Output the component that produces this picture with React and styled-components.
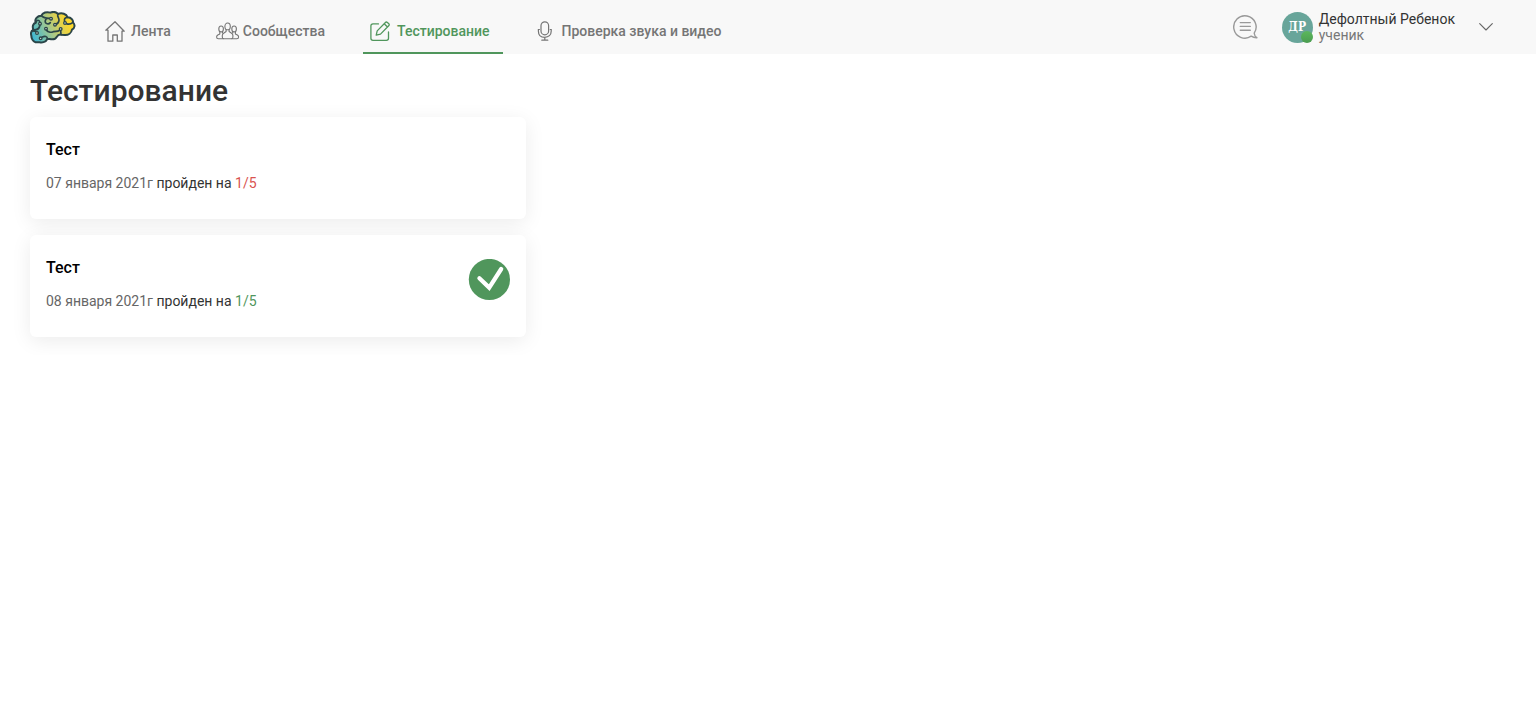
import React from "react";
import styled, { createGlobalStyle } from "styled-components";

const GlobalStyle = createGlobalStyle`
  *, *::before, *::after { box-sizing: border-box; }
  body {
    margin: 0;
    background: #fff;
    color: #333;
    font-family: Roboto, "Liberation Sans", sans-serif;
    font-size: 14px;
  }
`;

const Header = styled.header`
  display: flex;
  align-items: center;
  height: 54px;
  padding: 0 43px 0 30px;
  background: #f8f8f8;
`;

const LogoLink = styled.a`
  display: flex;
  margin-right: 22px;
`;

const Nav = styled.nav`
  display: flex;
  align-self: stretch;
  gap: 24px;
`;

const NavLink = styled.a`
  display: flex;
  align-items: center;
  gap: ${(p) => p.$gap}px;
  padding: 10px 14px 0 7px;
  border-bottom: 2px solid ${(p) => (p.$active ? "#50965c" : "transparent")};
  color: ${(p) => (p.$active ? "#50965c" : "#757575")};
  font-weight: 500;
  line-height: 20px;
  text-decoration: none;
  white-space: nowrap;
`;

const Account = styled.div`
  display: flex;
  align-items: center;
  margin-left: auto;
`;

const IconButton = styled.button`
  display: flex;
  padding: 0;
  border: 0;
  background: none;
  color: #999;
  cursor: pointer;
`;

const ProfileButton = styled.button`
  display: flex;
  align-items: center;
  gap: 6px;
  margin-left: 24px;
  padding: 0;
  border: 0;
  background: none;
  font: inherit;
  text-align: left;
  color: #666;
  cursor: pointer;
`;

const Avatar = styled.span`
  position: relative;
  display: flex;
  align-items: center;
  justify-content: center;
  width: 31px;
  height: 31px;
  border-radius: 50%;
  background: #68a59a;
  color: #fff;
  font: bold 12px "DejaVu Serif Condensed", "DejaVu Serif", serif;
`;

const OnlineDot = styled.span`
  position: absolute;
  right: 0;
  bottom: 0;
  width: 12px;
  height: 12px;
  border-radius: 50%;
  background: linear-gradient(#5cb85c, #4a9c50);
`;

const Person = styled.span`
  display: flex;
  flex-direction: column;
  margin-right: 18px;
  line-height: 16px;
`;

const PersonName = styled.span`
  color: #333;
`;

const PersonRole = styled.span`
  color: #777;
`;

const Main = styled.main`
  padding: 18px 30px;
`;

const Title = styled.h1`
  margin: 0 0 7px;
  font-size: 30px;
  font-weight: 500;
  line-height: 38px;
`;

const TestList = styled.ul`
  display: flex;
  flex-direction: column;
  gap: 16px;
  width: 34%;
  min-width: 320px;
  max-width: 496px;
  margin: 0;
  padding: 0;
  list-style: none;
`;

const Card = styled.li`
  display: flex;
  align-items: flex-start;
  justify-content: space-between;
  padding: 24px 16px 26px;
  border-radius: 6px;
  background: #fff;
  box-shadow: 0 4px 20px rgba(0, 0, 0, 0.08);
`;

const CardTitle = styled.h2`
  margin: 0 0 14px;
  color: #000;
  font-size: 16px;
  font-weight: 500;
  line-height: 18px;
`;

const Result = styled.p`
  margin: 0;
  line-height: 20px;
`;

const DateText = styled.time`
  color: #666;
`;

const Score = styled.span`
  color: ${(p) => (p.$passed ? "#50965c" : "#d9534f")};
`;

function Logo() {
  return (
    <svg width="46" height="33" viewBox="30 32 138 99" fill="none" role="img" aria-label="Главная">
      <defs>
        <linearGradient id="brain" x1="36" y1="115" x2="145" y2="62" gradientUnits="userSpaceOnUse">
          <stop offset="0" stopColor="#38b6d8" />
          <stop offset="0.5" stopColor="#a5c98c" />
          <stop offset="0.8" stopColor="#e3d24c" />
          <stop offset="1" stopColor="#fbd72c" />
        </linearGradient>
      </defs>
      <g stroke="#2b4548" strokeWidth="6" strokeLinejoin="round" strokeLinecap="round">
        <path
          fill="url(#brain)"
          d="M64 46C68 37 80 33 91 37C98 34 108 34 114 41C126 36 139 41 143 51C153 52 160 58 159 66C166 73 165 83 156 88C154 98 145 105 134 104L123 103C118 102 113 105 110 110C106 117 97 118 89 116L82 116C78 124 68 128 59 126L47 126C39 122 34 115 34 106C32 99 34 91 40 88C36 78 40 69 47 67C43 56 52 46 64 46Z"
        />
        <path strokeWidth="5" d="M64 46C70 53 80 54 88 54M47 67C50 57 58 58 60 66M78 57C70 68 84 75 91 67M114 41C110 49 118 53 117 60C116 67 112 71 107 72M143 51C134 51 132 56 134 64M159 66C153 71 146 73 140 70M40 88C51 90 58 85 60 74M36 92C42 92 48 92 50 96M82 116C83 108 74 106 67 110M79 88C82 96 92 97 100 94C108 92 113 95 118 90M123 103L122 91" />
      </g>
      <g fill="#e5eee2" stroke="#2b4548" strokeWidth="4">
        <circle cx="93" cy="55" r="4" />
        <circle cx="60" cy="70" r="4" />
        <circle cx="105" cy="73" r="4" />
        <circle cx="135" cy="68" r="4" />
        <circle cx="78" cy="85" r="4" />
        <circle cx="122" cy="86" r="4" />
        <circle cx="51" cy="98" r="4" />
        <circle cx="62" cy="114" r="4" />
      </g>
    </svg>
  );
}

function HomeIcon() {
  return (
    <svg width="20" height="22" viewBox="0 0 20 22" fill="none" stroke="currentColor" strokeWidth="1.3" strokeLinejoin="round" strokeLinecap="round" aria-hidden="true">
      <path d="M3 10.2H.8L10 1.7L19.2 11.2H17V21.2H12.3V15H7.8V21.2H3Z" />
    </svg>
  );
}

function PeopleIcon() {
  return (
    <svg width="24" height="18" viewBox="0 0 24 18" fill="none" stroke="currentColor" strokeWidth="1.1" strokeLinejoin="round" aria-hidden="true">
      <ellipse cx="11.6" cy="4.4" rx="2.7" ry="3.4" />
      <path d="M10.1 7.4V9.5L7.6 11.2Q6.3 12 6.3 13.6V15Q6.3 16.8 7.8 16.8H15.4Q16.9 16.8 16.9 15V13.6Q16.9 12 15.6 11.2L13.1 9.5V7.4" />
      <ellipse cx="5.1" cy="7" rx="2.3" ry="3" />
      <ellipse cx="18.1" cy="7" rx="2.3" ry="3" />
      <path d="M3.8 9.6V11.9L1.8 12.9Q.6 13.6 .6 15Q.6 16.8 2.4 16.8H7.8M6.5 9.6V11.4" />
      <path d="M19.4 9.6V11.9L21.4 12.9Q22.6 13.6 22.6 15Q22.6 16.8 20.8 16.8H15.4M16.7 9.6V11.4" />
    </svg>
  );
}

function EditIcon() {
  return (
    <svg width="20" height="20" viewBox="0 0 20 20" fill="none" stroke="currentColor" strokeWidth="1.3" strokeLinejoin="round" strokeLinecap="round" aria-hidden="true">
      <path d="M8.5 2.9H3Q.9 2.9 .9 5V17.2Q.9 19.3 3 19.3H16.4Q18.5 19.3 18.5 17.2V11" />
      <path d="M6.2 14.2L7.2 9.9L15.4 1.5Q16.3 .5 17.4 1.4L18.8 2.7Q19.7 3.8 18.7 4.8L10.5 13.1ZM14.2 2.8L17.5 6" />
    </svg>
  );
}

function MicIcon() {
  return (
    <svg width="20" height="20" viewBox="-3 0 20 20" fill="none" stroke="currentColor" strokeWidth="1.2" strokeLinecap="round" aria-hidden="true">
      <rect x="4" y=".8" width="7.6" height="13" rx="3.8" />
      <path d="M2.4 8.5H1.4V10.2C1.4 14 4 16.3 7.8 16.3S14.2 14 14.2 10.2V8.5H13.2M7.8 16.3V19.1M4.8 19.2H10.8" />
    </svg>
  );
}

function ChatIcon() {
  return (
    <svg width="25" height="26" viewBox="0 1 25 26" fill="none" stroke="currentColor" strokeWidth="1.4" strokeLinecap="round" strokeLinejoin="round" aria-hidden="true">
      <path d="M21.2 20.2A11.2 11.2 0 1 0 18.2 23.2Q20.6 24.8 23.9 24.7Q21.5 23.2 21.2 20.2Z" />
      <path d="M7.3 9.6H17.3M7.3 13.4H17.3M7.3 17.2H17.3" />
    </svg>
  );
}

function ChevronIcon() {
  return (
    <svg width="14" height="8" viewBox="0 0 14 8" fill="none" stroke="currentColor" strokeWidth="1.1" strokeLinecap="round" strokeLinejoin="round" aria-hidden="true">
      <path d="M.7 .7L7 7L13.3 .7" />
    </svg>
  );
}

function PassedIcon() {
  return (
    <svg width="42" height="42" viewBox="0 0 42 42" fill="none" role="img" aria-label="Пройден">
      <circle cx="21.4" cy="20.5" r="20.6" fill="#50965c" />
      <path d="M11.4 19.2L21.2 28.6L33.2 10" stroke="#fff" strokeWidth="4.2" strokeLinecap="round" />
    </svg>
  );
}

const sections = [
  { label: "Лента", Icon: HomeIcon, gap: 6 },
  { label: "Сообщества", Icon: PeopleIcon, gap: 3 },
  { label: "Тестирование", Icon: EditIcon, gap: 7, active: true },
  { label: "Проверка звука и видео", Icon: MicIcon, gap: 7 },
];

const tests = [
  { date: "07 января 2021г", dateTime: "2021-01-07", score: "1/5", passed: false },
  { date: "08 января 2021г", dateTime: "2021-01-08", score: "1/5", passed: true },
];

export default function App() {
  return (
    <>
      <GlobalStyle />
      <Header>
        <LogoLink href="#">
          <Logo />
        </LogoLink>
        <Nav>
          {sections.map(({ label, Icon, gap, active }) => (
            <NavLink key={label} href="#" $gap={gap} $active={active} aria-current={active ? "page" : undefined}>
              <Icon />
              {label}
            </NavLink>
          ))}
        </Nav>
        <Account>
          <IconButton type="button" aria-label="Сообщения">
            <ChatIcon />
          </IconButton>
          <ProfileButton type="button">
            <Avatar>
              ДР
              <OnlineDot />
            </Avatar>
            <Person>
              <PersonName>Дефолтный Ребенок</PersonName>
              <PersonRole>ученик</PersonRole>
            </Person>
            <ChevronIcon />
          </ProfileButton>
        </Account>
      </Header>
      <Main>
        <Title>Тестирование</Title>
        <TestList>
          {tests.map((test) => (
            <Card key={test.dateTime}>
              <div>
                <CardTitle>Тест</CardTitle>
                <Result>
                  <DateText dateTime={test.dateTime}>{test.date}</DateText> пройден на{" "}
                  <Score $passed={test.passed}>{test.score}</Score>
                </Result>
              </div>
              {test.passed && <PassedIcon />}
            </Card>
          ))}
        </TestList>
      </Main>
    </>
  );
}
